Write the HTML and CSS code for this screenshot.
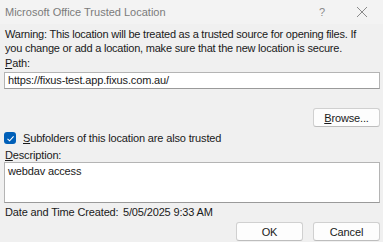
FILE: index.html
```html
<!DOCTYPE html>
<html lang="en">
<head>
    <meta charset="UTF-8">
    <title>Microsoft Office Trusted Location</title>
    <link rel="stylesheet" href="styles.css">
</head>
<body>
    <div class="titlebar">
        <span class="title">Microsoft Office Trusted Location</span>
        <span class="help">?</span>
        <span class="close">
            <svg width="12" height="12" viewBox="0 0 12 12"><path d="M1 1 L11 11 M11 1 L1 11" stroke="#8a8a8a" stroke-width="1" fill="none"/></svg>
        </span>
    </div>

    <div class="content">
        <p class="warning">Warning: This location will be treated as a trusted source for opening files. If<br>you change or add a location, make sure that the new location is secure.</p>

        <div class="label"><u>P</u>ath:</div>
        <div class="field path">https://fixus-test.app.fixus.com.au/</div>

        <div class="row-right browse-row">
            <button class="btn"><u>B</u>rowse...</button>
        </div>

        <div class="check-row">
            <span class="checkbox">
                <svg width="11" height="11" viewBox="0 0 11 11"><path d="M2.5 5.8 L4.6 7.8 L8.6 3.4" stroke="#fff" stroke-width="1.1" fill="none"/></svg>
            </span>
            <span><u>S</u>ubfolders of this location are also trusted</span>
        </div>

        <div class="label"><u>D</u>escription:</div>
        <div class="field desc">webdav access</div>

        <div class="date-row">
            <span class="date-label">Date and Time Created:</span>
            <span>5/05/2025 9:33 AM</span>
        </div>

        <div class="row-right buttons">
            <button class="btn">OK</button>
            <button class="btn">Cancel</button>
        </div>
    </div>
</body>
</html>
```

FILE: styles.css
```css
body {
    margin: 0;
    background: #f0f0f0;
    color: #1a1a1a;
    font-family: 'Liberation Sans', Arial, sans-serif;
    font-size: 11px;
    letter-spacing: -0.15px;
    overflow: hidden;
}
u {
    text-decoration-thickness: 1px;
    text-underline-offset: 1px;
}
.titlebar {
    height: 24px;
    display: flex;
    align-items: center;
    background: #f3f3f3;
    color: #7b7b7b;
    padding-left: 5px;
}
.title {
    flex: 1;
    letter-spacing: 0;
}
.help {
    width: 40px;
    text-align: center;
    color: #8a8a8a;
}
.close {
    width: 40px;
    display: flex;
    justify-content: center;
    margin-right: 1px;
}
.content {
    padding: 0 3px 0 4px;
}
.warning {
    margin: 3px 0 0 1px;
    line-height: 14px;
    letter-spacing: -0.22px;
    white-space: nowrap;
}
.label {
    margin: 1px 0 0 1px;
    line-height: 14px;
}
.field {
    background: #fff;
    border: 1px solid #b4b4b4;
    border-bottom-color: #9a9a9a;
    box-sizing: border-box;
    padding: 0 3px;
    line-height: 15px;
}
.path {
    margin-top: 2px;
    height: 17px;
}
.desc {
    height: 41px;
    padding-top: 1px;
}
.row-right {
    display: flex;
    justify-content: flex-end;
    gap: 10px;
}
.browse-row {
    margin-top: 19px;
}
.btn {
    width: 67px;
    height: 19px;
    padding: 0;
    background: #fdfdfd;
    border: 1px solid #d0d0d0;
    border-bottom-color: #bdbdbd;
    border-radius: 3px;
    font-family: 'Liberation Sans', Arial, sans-serif;
    font-size: 11px;
    letter-spacing: -0.15px;
    color: #1a1a1a;
}
.check-row {
    display: flex;
    align-items: center;
    gap: 7px;
    margin-top: 5px;
    height: 12px;
}
.checkbox {
    width: 12px;
    height: 12px;
    border-radius: 3px;
    background: #005fb8;
    display: flex;
    align-items: center;
    justify-content: center;
}
.check-row + .label {
    margin-top: 4px;
}
.date-row {
    margin: 2px 0 0 1px;
    line-height: 14px;
    display: flex;
    white-space: nowrap;
}
.date-label {
    width: 118px;
}
.buttons {
    margin-top: 3px;
}
```
